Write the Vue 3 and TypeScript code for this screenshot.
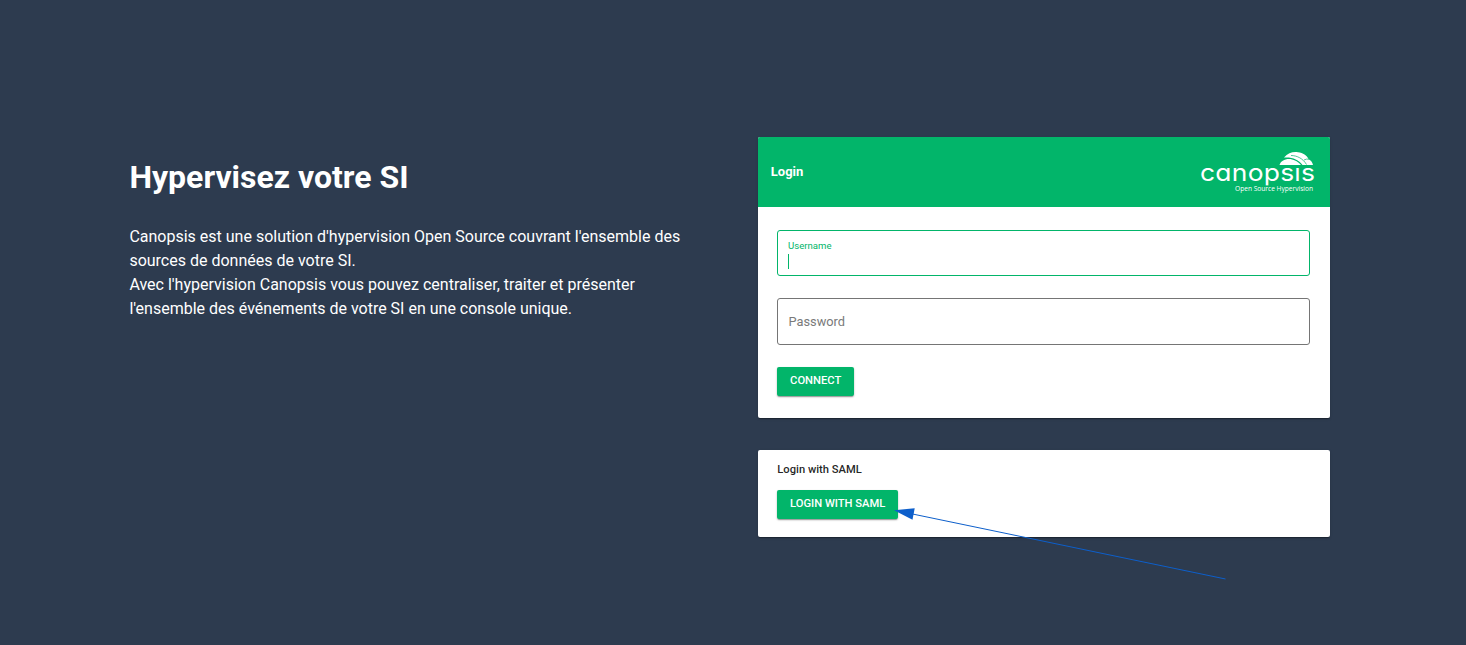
<script setup lang="ts">
import { ref } from 'vue'

const username = ref<string>('')
const paragraphs: string[][] = [
  ["Canopsis est une solution d'hypervision Open Source couvrant l'ensemble des", 'sources de données de votre SI.'],
  ["Avec l'hypervision Canopsis vous pouvez centraliser, traiter et présenter", "l'ensemble des événements de votre SI en une console unique."],
]
</script>

<template>
  <main class="page">
    <section class="intro">
      <h1>Hypervisez votre SI</h1>
      <p v-for="(lines, i) in paragraphs" :key="i">
        <span v-for="line in lines" :key="line" class="line">{{ line }}</span>
      </p>
    </section>

    <div class="forms">
      <form class="card login" @submit.prevent>
        <header class="bar">
          <span class="title">Login</span>
          <svg class="logo" width="116" height="44" viewBox="0 0 116 44">
            <clipPath id="word-area"><rect x="0" y="16.500" width="116" height="19" /></clipPath>
            <path d="M79.500 15C80.500 11 85 8.500 90.500 9Q97.500 10.500 101 15Z" fill="#fff" />
            <path d="M84 7.500C88 3 93 1.500 98 2.300C103 3 107 5.500 108.500 9C111 10.300 112.500 12.500 113 15H102.500C98.500 9.500 92 6.800 84 7.500Z" fill="#fff" />
            <path d="M91 5.500C97 5.500 103 8.500 106.500 14.500M104 10Q106.500 8.500 109.500 9.300" fill="none" stroke="#02b56a" stroke-width=".7" />
            <g clip-path="url(#word-area)">
              <text class="word" transform="scale(1.1 1)" x="0" y="31.500" textLength="104.500" lengthAdjust="spacing">canopsis</text>
            </g>
            <text class="tag" x="35" y="41" textLength="78" lengthAdjust="spacingAndGlyphs">Open Source Hypervision</text>
          </svg>
        </header>
        <div class="fields">
          <label class="field active">
            <span class="label">Username</span>
            <span class="value">{{ username }}<i class="caret"></i></span>
          </label>
          <label class="field password"><span class="label">Password</span></label>
          <button class="btn connect" type="submit">CONNECT</button>
        </div>
      </form>

      <section class="card saml">
        <h2>Login with SAML</h2>
        <button class="btn wide" type="button">LOGIN WITH SAML</button>
      </section>
    </div>

    <svg class="arrow" width="334" height="74" viewBox="0 0 334 74">
      <path d="M18 5.900L331.500 71" stroke="#0d5fcb" stroke-width="1" fill="none" />
      <path d="M0 2.200L20.700 .2L18.500 11.700Z" fill="#0d5fcb" />
    </svg>
  </main>
</template>

<style>
body { background: #2d3b4f; }
</style>

<style scoped>
* { box-sizing: border-box; }
.page {
  position: relative;
  display: flex;
  align-items: flex-start;
  width: 1466px;
  height: 645px;
  padding: 137px 136px 0 129.400px;
  overflow: hidden;
  background: #2d3b4f;
  color: #fff;
  font-family: Roboto, sans-serif;
}
.intro { flex: 1; padding-top: 16px; }
h1 { margin: 0 0 24px; font-size: 32px; line-height: 48px; font-weight: 700; white-space: nowrap; }
p { margin: 0; font-size: 16px; line-height: 24px; }
.line { display: block; white-space: nowrap; }
.forms { display: flex; flex-direction: column; gap: 32px; width: 572px; }
.card {
  overflow: hidden;
  border-radius: 2px;
  background: #fff;
  box-shadow: 0 2px 1px -1px rgba(0, 0, 0, .2), 0 1px 1px rgba(0, 0, 0, .14), 0 1px 3px rgba(0, 0, 0, .12);
}
.login { height: 281px; }
.bar {
  display: flex;
  align-items: center;
  justify-content: space-between;
  height: 70px;
  padding: 0 14px 0 12.800px;
  background: #02b56a;
}
.title { font-size: 13px; line-height: 16px; font-weight: 700; }
.logo { display: block; overflow: visible; }
.word { font-family: Inter, sans-serif; font-size: 24px; font-feature-settings: "cv11"; fill: #fff; }
.tag { font-family: "Open Sans", sans-serif; font-size: 6.500px; fill: #fff; }
.fields { display: flex; flex-direction: column; align-items: flex-start; padding: 23px 20px 0 19px; }
.field {
  display: flex;
  flex-direction: column;
  width: 100%;
  height: 46px;
  padding: 8px 10px 0;
  border: 1px solid #02b56a;
  border-radius: 3px;
}
.active .label { color: #02b56a; font-size: 9.600px; line-height: 13px; }
.value { display: flex; height: 15px; margin-top: 2px; }
.caret { width: 1px; height: 15px; background: #02b56a; }
.password { height: 47px; margin-top: 22px; padding: 0 10.500px; justify-content: center; border-color: #757575; }
.password .label { font-size: 12.800px; line-height: 16px; color: #7a7a7a; }
.btn {
  height: 29px;
  padding: 0 0 2px .4px;
  border: 0;
  border-radius: 2px;
  background: #02b56a;
  color: #fff;
  font: 500 11.200px/27px Roboto, sans-serif;
  white-space: nowrap;
  box-shadow: 0 2px 1px -1px rgba(0, 0, 0, .2), 0 1px 2px rgba(0, 0, 0, .3);
}
.connect { width: 77px; margin-top: 22px; }
.wide { display: block; width: 121px; }
.saml { height: 87px; padding: 12px 19px 0; }
h2 { margin: 0 0 12px .3px; color: rgba(0, 0, 0, .87); font-size: 11.200px; line-height: 16px; font-weight: 500; }
.arrow { position: absolute; left: 894px; top: 508px; }
</style>
